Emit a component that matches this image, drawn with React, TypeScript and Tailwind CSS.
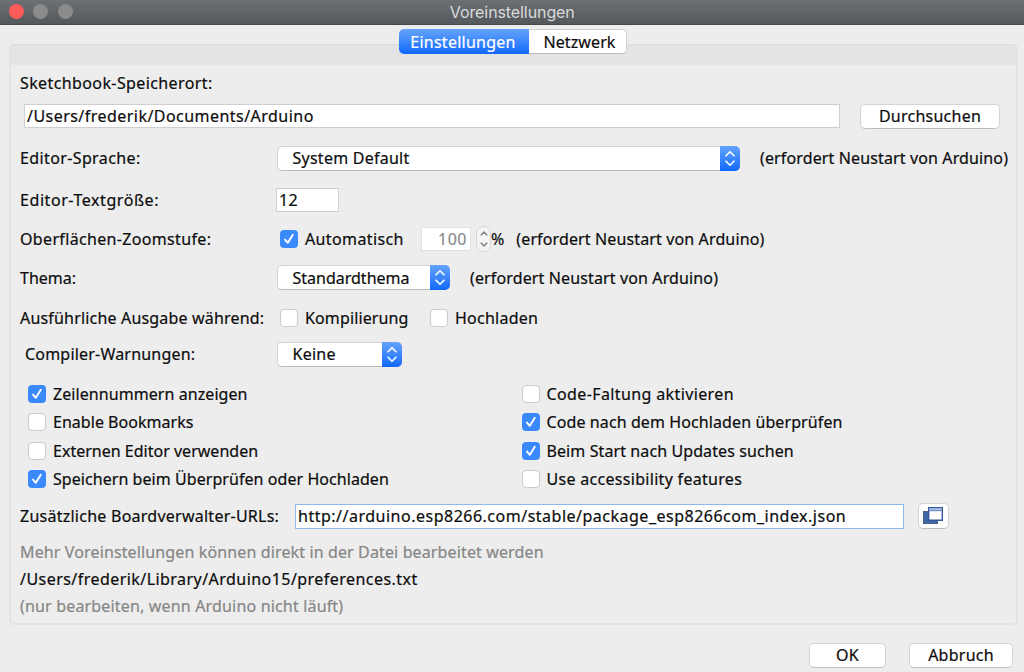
import { useState } from 'react';
import type { ReactNode } from 'react';
import clsx from 'clsx';

interface CheckboxProps {
  label: string;
  defaultChecked?: boolean;
  className?: string;
}

function Checkbox({ label, defaultChecked = false, className }: CheckboxProps) {
  const [checked, setChecked] = useState(defaultChecked);

  return (
    <button
      role="checkbox"
      aria-checked={checked}
      onClick={() => setChecked(!checked)}
      className={clsx('flex items-center gap-[7px] text-left', className)}
    >
      <span
        className={clsx(
          'flex h-[18px] w-[18px] shrink-0 items-center justify-center rounded-[4px]',
          checked ? 'bg-[#3b8afd]' : 'border border-[#cbcbcb] bg-white'
        )}
      >
        {checked && (
          <svg width="18" height="18" viewBox="0 0 18 18" fill="none">
            <path d="M5 9.6 7.8 12.8 12.8 4.8" stroke="white" strokeWidth="1.9" strokeLinecap="round" strokeLinejoin="round" />
          </svg>
        )}
      </span>
      <span>{label}</span>
    </button>
  );
}

function Select({ value, className }: { value: string; className: string }) {
  return (
    <button
      className={clsx(
        'flex h-[25px] items-center justify-between rounded-[5px] border border-[#d2d2d2] border-b-[#bbbbbb] bg-white pl-[14.5px]',
        className
      )}
    >
      <span>{value}</span>
      <span className="-my-px -mr-px flex h-[25px] w-[20px] items-center justify-center rounded-r-[5px] bg-linear-to-b from-[#62a3fb] to-[#0d67fc]">
        <svg width="20" height="25" viewBox="0 0 20 25" fill="none">
          <path d="M6 9.8 10 5.8 14 9.8M6 15.2 10 19.2 14 15.2" stroke="white" strokeWidth="1.6" strokeLinecap="round" strokeLinejoin="round" />
        </svg>
      </span>
    </button>
  );
}

function Button({ children, className }: { children: ReactNode; className: string }) {
  return (
    <button
      className={clsx(
        'flex items-center justify-center rounded-[5px] border border-[#d4d4d4] border-b-[#bdbdbd] bg-white',
        className
      )}
    >
      {children}
    </button>
  );
}

function Row({ label, className, labelClass, children }: { label: string; className: string; labelClass?: string; children?: ReactNode }) {
  return (
    <div className={clsx('flex items-center', className)}>
      <span className={clsx('w-[257px] shrink-0', labelClass)}>{label}</span>
      {children}
    </div>
  );
}

function RestartHint() {
  return <span className="tracking-[0.13px]">(erfordert Neustart von Arduino)</span>;
}

export default function App() {
  return (
    <div className="flex h-[672px] w-[1024px] flex-col overflow-hidden bg-[#ededed] font-['Noto_Sans',sans-serif] text-[16px] leading-none tracking-[0.25px] whitespace-nowrap text-[#0c0c0c] [-webkit-text-stroke:0.2px]">
      <header className="grid h-[25px] shrink-0 grid-cols-[1fr_auto_1fr] items-center border-b border-[#45484b] bg-linear-to-b from-[#6d7175] to-[#54575b] pr-[6px] pl-[8.5px]">
        <div className="-mt-[2px] flex gap-[9.5px]">
          <span className="h-[15px] w-[15px] rounded-full bg-[#fc5b57]" />
          <span className="h-[15px] w-[15px] rounded-full bg-[#8b8b8c]" />
          <span className="h-[15px] w-[15px] rounded-full bg-[#8b8b8c]" />
        </div>
        <h1 className="-ml-[2px] font-['Inter',sans-serif] text-[16px] tracking-[-0.09px] text-[#d9dadb] [-webkit-text-stroke:0]">Voreinstellungen</h1>
      </header>

      <nav className="relative z-10 mt-[4px] -mb-[10px] ml-[399px] flex h-[25px] w-[228px] shrink-0">
        <button className="w-[130px] rounded-l-[5px] bg-linear-to-b from-[#62a3fb] to-[#0d67fc] pr-[2px] text-white">Einstellungen</button>
        <button className="w-[98px] rounded-r-[5px] border border-l-0 border-[#d2d2d2] border-b-[#bbbbbb] bg-white pl-[4px] tracking-[0.1px]">Netzwerk</button>
      </nav>

      <main className="mr-[6px] ml-[9px] h-[581px] shrink-0 rounded-[5px] border-2 border-[#e3e3e3] border-t-[#dfdfdf] bg-[#ededed]">
        <div className="h-[19px] bg-[#e4e4e4]" />
        <div className="pl-[9px]">
          <Row label="Sketchbook-Speicherort:" labelClass="tracking-[0.39px]" className="h-[36px]" />
          <div className="flex h-[30px] items-center pl-[4px]">
            <div className="flex h-[24px] w-[816px] items-center border border-[#cfcfcf] bg-white pl-[2px] tracking-[0.46px]">
              /Users/frederik/Documents/Arduino
            </div>
            <Button className="ml-[20px] h-[25px] w-[140px]">Durchsuchen</Button>
          </div>
          <Row label="Editor-Sprache:" labelClass="tracking-[0.38px]" className="h-[54px]">
            <Select value="System Default" className="mr-[20px] w-[463px]" />
            <RestartHint />
          </Row>
          <Row label="Editor-Textgröße:" labelClass="tracking-[0.57px]" className="h-[29px]">
            <div className="-ml-px flex h-[24px] w-[63px] items-center border border-[#cfcfcf] bg-white pl-[2px]">12</div>
          </Row>
          <Row label="Oberflächen-Zoomstufe:" labelClass="tracking-[0.34px]" className="h-[49px]">
            <div className="ml-[3px] w-[141px]">
              <Checkbox label="Automatisch" defaultChecked className="tracking-[0.38px]" />
            </div>
            <div className="flex h-[24px] w-[50px] items-center justify-end border border-[#e2e2e2] bg-white pr-[3px] tracking-[0.5px] text-[#8a8a8a]">100</div>
            <div className="ml-[5px] flex h-[26px] w-[15px] items-center justify-center rounded-[7px] border border-[#d9d9d9] bg-[#f4f4f4]">
              <svg width="12" height="24" viewBox="0 0 12 24" fill="none">
                <path d="M3.2 8 6 5 8.8 8M3.2 16 6 19 8.8 16" stroke="#858585" strokeWidth="1.5" strokeLinecap="round" strokeLinejoin="round" />
              </svg>
            </div>
            <span className="tracking-[-1px]">%</span>
            <span className="ml-[13px]"><RestartHint /></span>
          </Row>
          <Row label="Thema:" labelClass="tracking-[0px]" className="h-[29px]">
            <Select value="Standardthema" className="mr-[20px] w-[173px] tracking-[0px]" />
            <RestartHint />
          </Row>
          <Row label="Ausführliche Ausgabe während:" labelClass="tracking-[0.18px]" className="h-[51px]">
            <div className="ml-[3px] w-[150px]">
              <Checkbox label="Kompilierung" className="tracking-[0.13px]" />
            </div>
            <Checkbox label="Hochladen" />
          </Row>
          <Row label="Compiler-Warnungen:" labelClass="pl-[5px] tracking-[0.2px]" className="h-[22px]">
            <Select value="Keine" className="w-[125px]" />
          </Row>

          <div className="mt-[15px] grid grid-flow-col grid-cols-[493.5px_1fr] grid-rows-[28px_28px_29px_28px] items-center pl-[8px]">
            <Checkbox label="Zeilennummern anzeigen" defaultChecked className="tracking-[0.07px]" />
            <Checkbox label="Enable Bookmarks" className="tracking-[0.03px]" />
            <Checkbox label="Externen Editor verwenden" className="tracking-[0.01px]" />
            <Checkbox label="Speichern beim Überprüfen oder Hochladen" defaultChecked className="tracking-[0.06px]" />
            <Checkbox label="Code-Faltung aktivieren" className="tracking-[0.38px]" />
            <Checkbox label="Code nach dem Hochladen überprüfen" defaultChecked className="tracking-[0.1px]" />
            <Checkbox label="Beim Start nach Updates suchen" defaultChecked className="tracking-[0.1px]" />
            <Checkbox label="Use accessibility features" className="tracking-[0.3px]" />
          </div>

          <div className="flex h-[46px] items-center">
            <span className="w-[275px]">Zusätzliche Boardverwalter-URLs:</span>
            <div className="flex h-[25px] w-[609px] items-center border border-[#8fb9ee] bg-white pl-[2px] tracking-[0.5px]">
              http://arduino.esp8266.com/stable/package_esp8266com_index.json
            </div>
            <Button className="ml-[14px] h-[26px] w-[31px]">
              <svg width="21" height="18" viewBox="0 0 21 18">
                <path d="M0 4h15v13H0z" fill="#3f66a6" />
                <path d="M.5 4.5h14v12H.5z" fill="none" stroke="#5a5d62" strokeDasharray="1 1" />
                <path d="M5.7.7h13.6v12.6H5.7z" fill="white" stroke="#35589a" strokeWidth="1.4" />
                <path d="M6.4 1.4h12.2v1.8H6.4z" fill="#9db9e2" />
                <path d="M6 3.7h13" stroke="#5a7fba" strokeWidth="1" />
              </svg>
            </Button>
          </div>

          <p className="flex h-[25px] items-center tracking-[0.13px] text-[#868686]">Mehr Voreinstellungen können direkt in der Datei bearbeitet werden</p>
          <p className="flex h-[30px] items-center tracking-[0.45px]">/Users/frederik/Library/Arduino15/preferences.txt</p>
          <p className="flex h-[24px] items-center tracking-[0.17px] text-[#868686]">(nur bearbeiten, wenn Arduino nicht läuft)</p>
        </div>
      </main>

      <footer className="mt-[18px] flex gap-[23px] pl-[809px]">
        <Button className="h-[25px] w-[77px] pb-[2px]">OK</Button>
        <Button className="h-[25px] w-[104px] pb-[2px]">Abbruch</Button>
      </footer>
    </div>
  );
}
